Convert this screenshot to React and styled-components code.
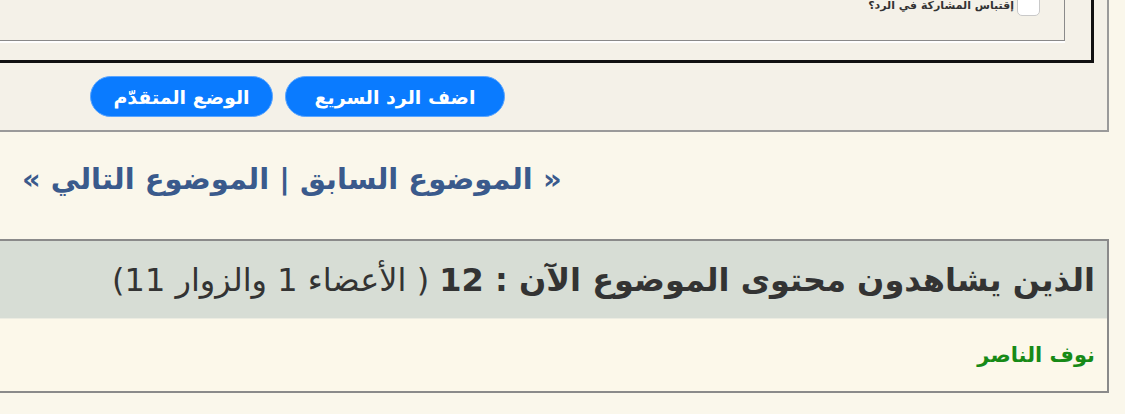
import styled, { createGlobalStyle } from "styled-components"

const GlobalStyle = createGlobalStyle`
    html, body {
        margin: 0;
        padding: 0;
        background: #faf7eb;
        overflow: hidden;
    }
    body {
        font-family: "DejaVu Sans", "Noto Sans", sans-serif;
    }
`

const Page = styled.div`
    display: flow-root;
    direction: rtl;
    width: 1125px;
    padding-right: 16px;
    box-sizing: border-box;
`

const ReplyPanel = styled.div`
    margin-top: -40px;
    margin-left: -10px;
    background: #f4f1e8;
    border: 2px solid #9a9a9a;
    border-top: none;
    padding: 0 13px 13px 0;
`

const BlackFrame = styled.div`
    border: 3px solid #111;
    border-top: none;
    margin-left: -10px;
    padding: 0 26px 19px 0;
`

const OptionsBox = styled.div`
    border: 1px solid #8a8a8a;
    border-top: none;
    margin-left: -10px;
    box-shadow: 0 2px 0 #ffffff;
    padding: 34px 24px 24px 0;
    display: flex;
    align-items: center;
    gap: 3px;
    white-space: nowrap;
`

const Check = styled.span`
    display: inline-block;
    width: 21px;
    height: 20px;
    border: 1.5px solid #c9c9c9;
    border-radius: 5px;
    background: #ffffff;
`

const CheckLabel = styled.span`
    font-size: 11px;
    font-weight: bold;
    color: #333;
`

const ButtonRow = styled.div`
    display: flex;
    justify-content: flex-end;
    gap: 12px;
    padding-left: 98px;
    margin-top: 13px;
`

const PillButton = styled.button`
    direction: rtl;
    height: 41px;
    width: ${p => p.$w}px;
    border: 1px solid #5aa5ff;
    border-radius: 21px;
    background: #0a7bff;
    color: #ffffff;
    font-family: "DejaVu Sans", sans-serif;
    font-size: 19px;
    font-weight: bold;
    padding: 0;
    white-space: nowrap;
`

const TopicNav = styled.div`
    text-align: left;
    padding-left: 22px;
    margin-top: 30px;
    height: 77px;
    font-size: 29px;
    font-weight: bold;
    color: #3a5a8c;
`

const ViewersBox = styled.div`
    margin-left: -10px;
    border: 2px solid #8a8a8a;
    border-left: none;
`

const ViewersHead = styled.div`
    background: #d7ddd5;
    height: 77px;
    display: flex;
    align-items: center;
    padding-right: 12px;
    font-size: 32px;
    color: #333;
    white-space: nowrap;
    border-bottom: 1px solid #ecece2;
    strong {
        font-weight: bold;
    }
`

const ViewersBody = styled.div`
    background: #fcf8ea;
    height: 72px;
    display: flex;
    align-items: center;
    padding-right: 12px;
`

const MemberName = styled.span`
    font-size: 21px;
    font-weight: bold;
    color: #178a17;
`

export default function App() {
    return (
        <>
            <GlobalStyle />
            <Page>
                <ReplyPanel>
                    <BlackFrame>
                        <OptionsBox>
                            <Check />
                            <CheckLabel>إقتباس المشاركة في الرد؟</CheckLabel>
                        </OptionsBox>
                    </BlackFrame>
                    <ButtonRow>
                        <PillButton $w={220}>اضف الرد السريع</PillButton>
                        <PillButton $w={183}>الوضع المتقدّم</PillButton>
                    </ButtonRow>
                </ReplyPanel>
                <TopicNav>« الموضوع السابق | الموضوع التالي »</TopicNav>
                <ViewersBox>
                    <ViewersHead>
                        <span><strong>الذين يشاهدون محتوى الموضوع الآن : 12</strong> ( الأعضاء 1 والزوار 11)</span>
                    </ViewersHead>
                    <ViewersBody>
                        <MemberName>نوف الناصر</MemberName>
                    </ViewersBody>
                </ViewersBox>
            </Page>
        </>
    )
}
